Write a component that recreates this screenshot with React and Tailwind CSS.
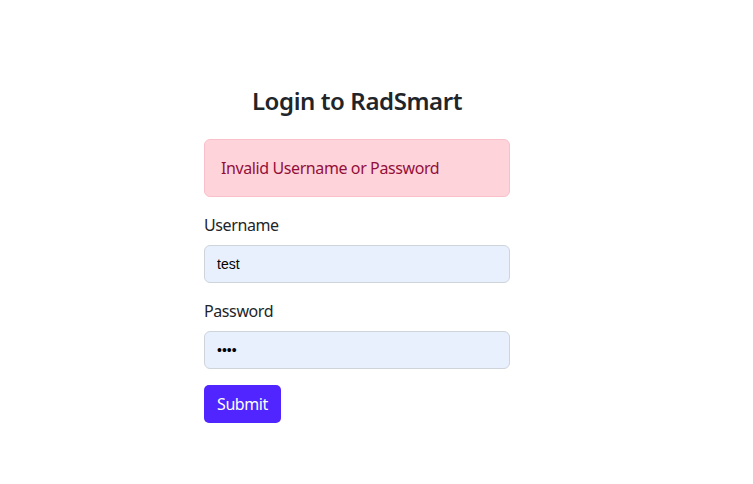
export default function App() {
  return (
    <div className="min-h-screen bg-white text-[#212529] font-['Noto_Sans',sans-serif] tracking-[-0.025em]">
      <div className="ml-[204px] w-[306px] pt-[86px]">
        <h1 className="text-center text-[24px] leading-[29px] font-semibold mb-[24px]">Login to RadSmart</h1>
        <div className="h-[58px] mb-4 px-4 flex items-center rounded-[6px] border border-[#f9c0c9] bg-[#fed4da] text-[#930f3a] text-[16px] leading-6">
          Invalid Username or Password
        </div>
        <div className="mb-4">
          <label className="block text-[16px] leading-6 mb-2">Username</label>
          <input
            className="block w-full h-[38px] px-3 rounded-[6px] border border-[#ced4da] bg-[#e8f0fe] text-black text-[14px] tracking-normal font-['Liberation_Sans',sans-serif] outline-none"
            defaultValue="test"
          />
        </div>
        <div className="mb-4">
          <label className="block text-[16px] leading-6 mb-2">Password</label>
          <input
            type="password"
            className="block w-full h-[38px] px-3 rounded-[6px] border border-[#ced4da] bg-[#e8f0fe] text-black text-[14px] tracking-normal font-['Liberation_Sans',sans-serif] outline-none"
            defaultValue="test"
          />
        </div>
        <button className="h-[38px] w-[77px] rounded-[5px] bg-[#5025ff] text-white text-[16px] leading-6">
          Submit
        </button>
      </div>
    </div>
  );
}
